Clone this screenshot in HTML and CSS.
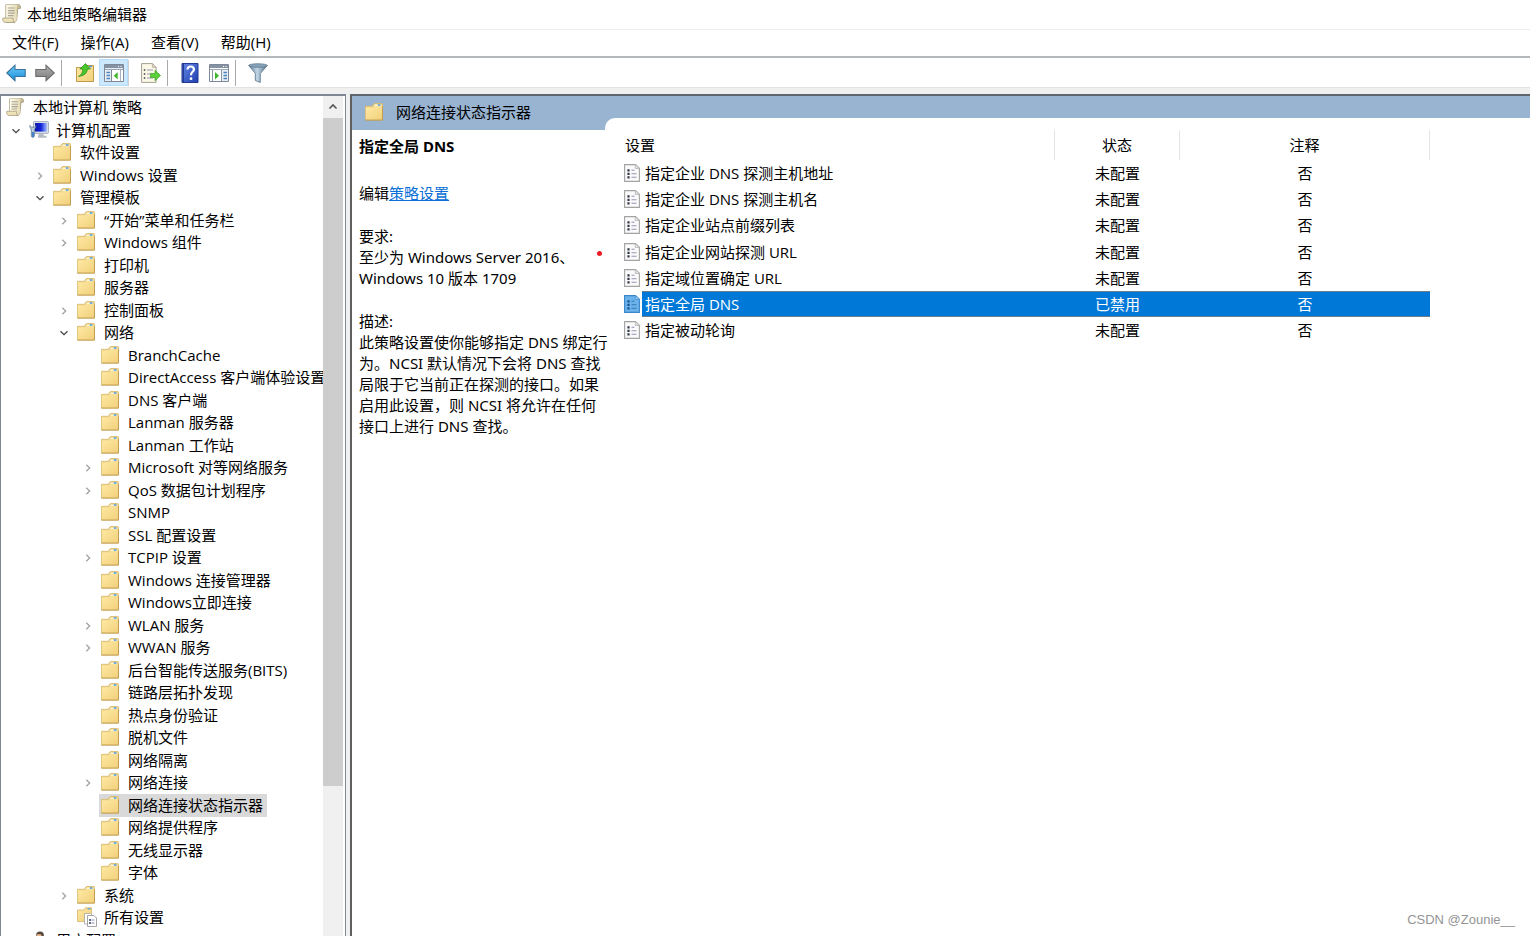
FILE: index.html
```html
<!DOCTYPE html>
<html lang="zh-CN">
<head>
<meta charset="utf-8">
<title>本地组策略编辑器</title>
<link rel="stylesheet" href="styles.css">
</head>
<body>
<svg class="defs" aria-hidden="true">
  <defs>
    <linearGradient id="g-folder" x1="0" y1="0" x2="1" y2="1"><stop offset="0" stop-color="#ffe9a3"/><stop offset="1" stop-color="#f1d07c"/></linearGradient>
    <linearGradient id="g-blue" x1="0" y1="0" x2="0" y2="1"><stop offset="0" stop-color="#6fcaf7"/><stop offset="1" stop-color="#178ddb"/></linearGradient>
    <linearGradient id="g-gray" x1="0" y1="0" x2="0" y2="1"><stop offset="0" stop-color="#b0b0b0"/><stop offset="1" stop-color="#7b7b7b"/></linearGradient>
    <linearGradient id="g-help" x1="0" y1="0" x2="1" y2="1"><stop offset="0" stop-color="#6688e8"/><stop offset="1" stop-color="#1f3fae"/></linearGradient>
    <linearGradient id="g-screen" x1="0" y1="0" x2="1" y2="0"><stop offset="0" stop-color="#0a12a8"/><stop offset=".5" stop-color="#1224d8"/><stop offset="1" stop-color="#a8c0ff"/></linearGradient>
    <linearGradient id="g-funnel" x1="0" y1="0" x2="1" y2="0"><stop offset="0" stop-color="#5d7f9c"/><stop offset=".45" stop-color="#c2d6e6"/><stop offset="1" stop-color="#4f6f8b"/></linearGradient>
    <linearGradient id="g-scroll" x1="0" y1="0" x2="1" y2="0"><stop offset="0" stop-color="#fffdf0"/><stop offset="1" stop-color="#e4d8b0"/></linearGradient>
  </defs>
  <symbol id="folder" viewBox="0 0 18 18">
    <path d="M.5 3.300h7L8.800 1q.3-.5.9-.5h6.800q1 0 1 1V17H.5z" fill="#f3d88f" stroke="#d6b566" stroke-width=".8"/>
    <path d="M9.800 1.700h6.200v1.600H9.200z" fill="#fff6da"/><rect x="12.800" y="1.300" width="2.700" height="1.500" fill="#4a9be0"/>
    <path d="M.8 4.500h8.400l1-1h6.300q.7 0 .7.7v12.300H.8z" fill="url(#g-folder)"/>
    <path d="M.4 17.100h17.100V3.500" fill="none" stroke="#bf9a4c" stroke-width=".9"/>
  </symbol>
  <symbol id="scroll" viewBox="0 0 18 18">
    <path d="M4 .6h12.200q1.800.4 1.200 3.600h-2.400l-1 10.500q-.3 2.200-2 2.700H4z" fill="#c9bd95" stroke="#9a9278" stroke-width=".7"/>
    <path d="M3.500.6h11.700q-1.200 1-1.200 3v10.500q0 2.300-2 3.300H3.500z" fill="url(#g-scroll)"/>
    <path d="M3.500 13V.6" stroke="#b9af90" stroke-width=".8"/>
    <path d="M.8 13.300h9.700q-.4 3.700 1.700 4.100H2.200q-2.200-1.300-1.400-4.100z" fill="#efe3b8" stroke="#a0967a" stroke-width=".7"/>
    <path d="M5.500 3.800h6.500M5.500 6.200h6.500M5.500 8.600h6.500M5.500 11h5.500" stroke="#aaa593" stroke-width="1.100"/>
  </symbol>
  <symbol id="computer" viewBox="0 0 20 18">
    <rect x="4.500" y=".6" width="14.900" height="11.800" rx=".8" fill="#dce2ea" stroke="#8e9aa8" stroke-width=".8"/>
    <rect x="6" y="2" width="12" height="8.600" fill="url(#g-screen)"/>
    <path d="M10 12.400h4l1 2.300h2.500v2H9v-2z" fill="#b6bcc4"/>
    <path d="M.8 4.500q0 3 1.500 3.500v7.500q1.300 2 3 0V8q1.700-.5 1.700-3.500l-1.500 1.700H2.600z" fill="#bdd0e2" stroke="#567491" stroke-width=".8"/>
    <path d="M3 11h2v5H3z" fill="#4384c4"/>
  </symbol>
  <symbol id="user" viewBox="0 0 20 18">
    <circle cx="11" cy="4.500" r="3.900" fill="#54483f"/><circle cx="10" cy="6" r="3" fill="#e8b68c"/><path d="M4 17q0-7 7-7t7 7z" fill="#6aa2d6"/>
  </symbol>
  <symbol id="allset" viewBox="0 0 20 20">
    <path d="M.5 3h6.500L8.300.8h6.200V14.500H.5z" fill="url(#g-folder)" stroke="#d3ad5c" stroke-width=".7"/>
    <path d="M10.500 1.800h3" stroke="#4a9be0" stroke-width="1.200"/>
    <path d="M7.500 6.500h6l2 2v8.500h-8z" fill="#fff" stroke="#a5a5a5" stroke-width=".8"/>
    <path d="M10.500 8.500h6.500l2.500 2.500v8.500h-9z" fill="#fff" stroke="#8f8f8f" stroke-width=".8"/>
    <path d="M12 13h2M12 16h2" stroke="#354063" stroke-width="1.500"/><path d="M14.500 13h3M14.500 16h3" stroke="#8c8cb5"/>
  </symbol>
  <symbol id="doc" viewBox="0 0 16 18">
    <path d="M.6.600h10.900l3.900 3.700v13.100H.6z" fill="#fafafa" stroke="#a3a3a3" stroke-width="1.100"/>
    <path d="M11.300.8v3.700h4" fill="#e3e3e3" stroke="#b5b5b5" stroke-width=".8"/>
    <path d="M3.400 5.200h2.200v2.200H3.400zM3.400 8.700h2.200v2.200H3.400zM3.400 12.200h2.200v2.200H3.400z" fill="#343848"/>
    <path d="M7.500 6.300h3M7.500 9.800h5M7.500 13.300h5" stroke="#9793b8" stroke-width="1.100"/>
  </symbol>
  <symbol id="doc-sel" viewBox="0 0 16 18">
    <path d="M.6.600h10.900l3.900 3.700v13.100H.6z" fill="#6cb2eb" stroke="#3b86c8" stroke-width="1.100"/>
    <path d="M11.300.8v3.700h4" fill="#8fc6f1" stroke="#4b96d6" stroke-width=".8"/>
    <path d="M3.400 5.200h2.200v2.200H3.400zM3.400 8.700h2.200v2.200H3.400zM3.400 12.200h2.200v2.200H3.400z" fill="#155089"/>
    <path d="M7.500 6.300h3M7.500 9.800h5M7.500 13.300h5" stroke="#3377b8" stroke-width="1.100"/>
  </symbol>
  <symbol id="right" viewBox="0 0 16 16"><path d="M6.300 4.700 9.700 8l-3.400 3.300" fill="none" stroke="#a0a0a0" stroke-width="1.200"/></symbol>
  <symbol id="down" viewBox="0 0 16 16"><path d="M4.500 6.300 8 9.700l3.500-3.400" fill="none" stroke="#454545" stroke-width="1.300"/></symbol>
</svg>

<div class="window">
  <header class="titlebar">
    <svg class="ico-title"><use href="#scroll"/></svg>
    <h1>本地组策略编辑器</h1>
  </header>
  <nav class="menubar">
    <button type="button">文件(F)</button><button type="button">操作(A)</button><button type="button">查看(V)</button><button type="button">帮助(H)</button>
  </nav>
  <div class="toolbar" role="toolbar" aria-label="工具栏">
    <button type="button" aria-label="后退"><svg viewBox="0 0 20 18"><path d="M.8 9 9 1.200v4.300h10.200v7H9v4.300z" fill="url(#g-blue)" stroke="#38719c" stroke-width="1.100"/></svg></button>
    <button type="button" aria-label="前进"><svg viewBox="0 0 20 18"><path d="M19.200 9 11 1.200v4.300H.8v7H11v4.300z" fill="url(#g-gray)" stroke="#6b6b6b" stroke-width="1.100"/></svg></button>
    <span class="sep sep-first"></span>
    <button type="button" aria-label="上一级"><svg viewBox="0 0 20 20"><path d="M1.500 4.500h8l2-2h7v16h-17z" fill="url(#g-folder)" stroke="#bf9a4c"/><path d="M14 3.500h3" stroke="#4a9be0" stroke-width="1.300"/><path d="M3.500 13.500Q8 11 7.700 6H4.800l5.700-5.400L15.500 6h-3q-.5 6.500-9 7.500z" fill="#49c52d" stroke="#268c17" stroke-width=".7"/></svg></button>
    <button type="button" class="pressed" aria-label="显示/隐藏控制台树"><svg viewBox="0 0 20 18"><path d="M.5.500h19v17H.5z" fill="#e9eef4" stroke="#7d8998"/><path d="M1 1h18v3H1z" fill="#8492a4"/><path d="M14 2.500h1M16.500 2.500h1" stroke="#fff"/><path d="M1 5.500h18" stroke="#9ba7b5"/><path d="M7.500 6v11" stroke="#7d8998"/><path d="M8 6h11v11H8z" fill="#fff"/><path d="M2.500 8.500h3.500M2.500 11.500h3.500M2.500 14.500h3.500" stroke="#4b84bd" stroke-width="1.300"/><path d="m13.700 8-4 3.700 4 3.700z" fill="#3fb82b"/><path d="M16.500 6v11" stroke="#a7b1bd"/></svg></button>
    <span class="sep sep-tight"></span>
    <button type="button" aria-label="导出列表"><svg viewBox="0 0 20 20"><path d="M.6.600h11l3.500 3.500v15.300H.6z" fill="#fcf8e8" stroke="#a5a091"/><path d="M11.400.8v3.500h3.700" fill="#e3dcc8" stroke="#aaa28e" stroke-width=".7"/><path d="M2.800 7h1.500M2.800 11h1.500M2.800 15h1.500" stroke="#3b3b3b" stroke-width="1.600"/><path d="M6 7h6M6 11h4M6 15h6" stroke="#9694b4" stroke-width="1.200"/><path d="M9.500 10.500h4.500V7.300l5.500 5.200-5.500 5.200v-3.200H9.500z" fill="#5ccf3c" stroke="#38a323" stroke-width=".7"/></svg></button>
    <span class="sep sep-narrow"></span>
    <button type="button" aria-label="帮助"><svg viewBox="0 0 20 20"><path d="M2 .5h16v19H2z" fill="url(#g-help)" stroke="#1f3a8f"/><path d="M2.500 1H4v18H2.500z" fill="#233b96"/><path d="M7.500 6.500q.2-3 3.200-3t3.300 2.800q0 1.700-1.700 2.900-1.300 1-1.300 3" fill="none" stroke="#fff" stroke-width="2.200"/><circle cx="11" cy="15.700" r="1.400" fill="#fff"/></svg></button>
    <button type="button" aria-label="显示/隐藏操作窗格"><svg viewBox="0 0 20 18"><path d="M.5.500h19v17H.5z" fill="#fff" stroke="#7d8998"/><path d="M1 1h18v3H1z" fill="#8492a4"/><path d="M14 2.500h1M16.500 2.500h1" stroke="#fff"/><path d="M1 5.500h18" stroke="#9ba7b5"/><path d="M12.500 6v11M3.500 6v11" stroke="#8b97a5"/><path d="M13 6h6v11h-6z" fill="#e9eef4"/><path d="M14.500 8.500H18M14.500 11.500H18M14.500 14.500H18" stroke="#4b84bd" stroke-width="1.300"/><path d="m6 8 4 3.700-4 3.700z" fill="#3fb82b"/></svg></button>
    <span class="sep sep-narrow"></span>
    <button type="button" aria-label="筛选器"><svg viewBox="0 0 20 20"><path d="M.8 2.500 7.300 10.500v7l5 2v-9l7-8z" fill="url(#g-funnel)" stroke="#597389" stroke-width=".8"/><ellipse cx="10" cy="2.500" rx="9.300" ry="1.800" fill="#87a3ba" stroke="#597389" stroke-width=".7"/></svg></button>
  </div>

  <main class="panes">
    <section class="tree-pane">
      <ul class="tree" role="tree">
        <li class="l0"><span class="node"><svg><use href="#scroll"/></svg>本地计算机 策略</span></li>
        <li class="l1"><svg class="chev"><use href="#down"/></svg><span class="node"><svg class="wide"><use href="#computer"/></svg>计算机配置</span></li>
        <li class="l2"><i class="chev"></i><span class="node"><svg><use href="#folder"/></svg>软件设置</span></li>
        <li class="l2"><svg class="chev"><use href="#right"/></svg><span class="node"><svg><use href="#folder"/></svg>Windows 设置</span></li>
        <li class="l2"><svg class="chev"><use href="#down"/></svg><span class="node"><svg><use href="#folder"/></svg>管理模板</span></li>
        <li class="l3"><svg class="chev"><use href="#right"/></svg><span class="node"><svg><use href="#folder"/></svg>“开始”菜单和任务栏</span></li>
        <li class="l3"><svg class="chev"><use href="#right"/></svg><span class="node"><svg><use href="#folder"/></svg>Windows 组件</span></li>
        <li class="l3"><i class="chev"></i><span class="node"><svg><use href="#folder"/></svg>打印机</span></li>
        <li class="l3"><i class="chev"></i><span class="node"><svg><use href="#folder"/></svg>服务器</span></li>
        <li class="l3"><svg class="chev"><use href="#right"/></svg><span class="node"><svg><use href="#folder"/></svg>控制面板</span></li>
        <li class="l3"><svg class="chev"><use href="#down"/></svg><span class="node"><svg><use href="#folder"/></svg>网络</span></li>
        <li class="l4"><i class="chev"></i><span class="node"><svg><use href="#folder"/></svg>BranchCache</span></li>
        <li class="l4"><i class="chev"></i><span class="node"><svg><use href="#folder"/></svg>DirectAccess 客户端体验设置</span></li>
        <li class="l4"><i class="chev"></i><span class="node"><svg><use href="#folder"/></svg>DNS 客户端</span></li>
        <li class="l4"><i class="chev"></i><span class="node"><svg><use href="#folder"/></svg>Lanman 服务器</span></li>
        <li class="l4"><i class="chev"></i><span class="node"><svg><use href="#folder"/></svg>Lanman 工作站</span></li>
        <li class="l4"><svg class="chev"><use href="#right"/></svg><span class="node"><svg><use href="#folder"/></svg>Microsoft 对等网络服务</span></li>
        <li class="l4"><svg class="chev"><use href="#right"/></svg><span class="node"><svg><use href="#folder"/></svg>QoS 数据包计划程序</span></li>
        <li class="l4"><i class="chev"></i><span class="node"><svg><use href="#folder"/></svg>SNMP</span></li>
        <li class="l4"><i class="chev"></i><span class="node"><svg><use href="#folder"/></svg>SSL 配置设置</span></li>
        <li class="l4"><svg class="chev"><use href="#right"/></svg><span class="node"><svg><use href="#folder"/></svg>TCPIP 设置</span></li>
        <li class="l4"><i class="chev"></i><span class="node"><svg><use href="#folder"/></svg>Windows 连接管理器</span></li>
        <li class="l4"><i class="chev"></i><span class="node"><svg><use href="#folder"/></svg>Windows立即连接</span></li>
        <li class="l4"><svg class="chev"><use href="#right"/></svg><span class="node"><svg><use href="#folder"/></svg>WLAN 服务</span></li>
        <li class="l4"><svg class="chev"><use href="#right"/></svg><span class="node"><svg><use href="#folder"/></svg>WWAN 服务</span></li>
        <li class="l4"><i class="chev"></i><span class="node"><svg><use href="#folder"/></svg>后台智能传送服务(BITS)</span></li>
        <li class="l4"><i class="chev"></i><span class="node"><svg><use href="#folder"/></svg>链路层拓扑发现</span></li>
        <li class="l4"><i class="chev"></i><span class="node"><svg><use href="#folder"/></svg>热点身份验证</span></li>
        <li class="l4"><i class="chev"></i><span class="node"><svg><use href="#folder"/></svg>脱机文件</span></li>
        <li class="l4"><i class="chev"></i><span class="node"><svg><use href="#folder"/></svg>网络隔离</span></li>
        <li class="l4"><svg class="chev"><use href="#right"/></svg><span class="node"><svg><use href="#folder"/></svg>网络连接</span></li>
        <li class="l4"><i class="chev"></i><span class="node selected"><svg><use href="#folder"/></svg>网络连接状态指示器</span></li>
        <li class="l4"><i class="chev"></i><span class="node"><svg><use href="#folder"/></svg>网络提供程序</span></li>
        <li class="l4"><i class="chev"></i><span class="node"><svg><use href="#folder"/></svg>无线显示器</span></li>
        <li class="l4"><i class="chev"></i><span class="node"><svg><use href="#folder"/></svg>字体</span></li>
        <li class="l3"><svg class="chev"><use href="#right"/></svg><span class="node"><svg><use href="#folder"/></svg>系统</span></li>
        <li class="l3"><i class="chev"></i><span class="node"><svg class="wide"><use href="#allset"/></svg>所有设置</span></li>
        <li class="l1"><svg class="chev"><use href="#down"/></svg><span class="node"><svg class="wide"><use href="#user"/></svg>用户配置</span></li>
      </ul>
      <div class="scrollbar">
        <button type="button" aria-label="向上滚动"><svg viewBox="0 0 20 22"><path d="M6.500 12.500 10 9l3.500 3.500" fill="none" stroke="#555" stroke-width="1.600"/></svg></button>
        <div class="thumb"></div>
      </div>
    </section>

    <section class="result-pane">
      <div class="band">
        <h2><svg><use href="#folder"/></svg>网络连接状态指示器</h2>
        <div class="band-tab"></div>
      </div>
      <div class="content">
        <article class="detail">
          <h3>指定全局 DNS</h3>
          <p class="edit">编辑<a href="#policy">策略设置</a></p>
          <p>要求:<br>至少为 Windows Server 2016、<br>Windows 10 版本 1709</p>
          <p>描述:<br>此策略设置使你能够指定 DNS 绑定行<br>为。NCSI 默认情况下会将 DNS 查找<br>局限于它当前正在探测的接口。如果<br>启用此设置，则 NCSI 将允许在任何<br>接口上进行 DNS 查找。</p>
          <span class="dot"></span>
        </article>
        <div class="list">
          <table>
            <colgroup><col class="c-name"><col class="c-state"><col class="c-note"></colgroup>
            <thead><tr><th>设置</th><th>状态</th><th>注释</th></tr></thead>
            <tbody>
              <tr><td><div class="cell"><svg><use href="#doc"/></svg><span>指定企业 DNS 探测主机地址</span></div></td><td>未配置</td><td>否</td></tr>
              <tr><td><div class="cell"><svg><use href="#doc"/></svg><span>指定企业 DNS 探测主机名</span></div></td><td>未配置</td><td>否</td></tr>
              <tr><td><div class="cell"><svg><use href="#doc"/></svg><span>指定企业站点前缀列表</span></div></td><td>未配置</td><td>否</td></tr>
              <tr><td><div class="cell"><svg><use href="#doc"/></svg><span>指定企业网站探测 URL</span></div></td><td>未配置</td><td>否</td></tr>
              <tr><td><div class="cell"><svg><use href="#doc"/></svg><span>指定域位置确定 URL</span></div></td><td>未配置</td><td>否</td></tr>
              <tr class="active"><td><div class="cell"><svg><use href="#doc-sel"/></svg><span>指定全局 DNS</span></div></td><td>已禁用</td><td>否</td></tr>
              <tr><td><div class="cell"><svg><use href="#doc"/></svg><span>指定被动轮询</span></div></td><td>未配置</td><td>否</td></tr>
            </tbody>
          </table>
        </div>
      </div>
    </section>
  </main>
  <div class="watermark">CSDN @Zounie__</div>
</div>
</body>
</html>
```
FILE: styles.css
```css
* { box-sizing: border-box; }

body {
  margin: 0;
  color: #000;
  background: #fff;
  font: 15px/20px "Open Sans", "Noto Sans CJK SC", sans-serif;
}

h1, h2, h3, p, ul { margin: 0; padding: 0; font-size: 15px; font-weight: 400; }
button { padding: 0; border: 0; background: none; color: inherit; font: inherit; }
svg { display: block; flex: none; }
.defs { position: absolute; width: 0; height: 0; }

.window {
  position: relative;
  display: flex;
  flex-direction: column;
  height: 100vh;
  overflow: hidden;
  background: #f0f0f0;
}

.titlebar {
  display: flex;
  align-items: center;
  gap: 6px;
  height: 29px;
  padding: 0 0 2px 2px;
  background: #fff;
}
.ico-title { width: 19px; height: 19px; }

.menubar {
  display: flex;
  gap: 22px;
  height: 29px;
  padding: 0 0 2px 12px;
  background: #fff;
  border-top: 1px solid #ececec;
  border-bottom: 2px solid #b4b8bb;
}

.toolbar {
  display: flex;
  align-items: center;
  height: 30px;
  padding-left: 1px;
  background: #fff;
  border-bottom: 1px solid #e2e2e2;
}
.toolbar button {
  display: flex;
  align-items: center;
  justify-content: center;
  width: 29px;
  height: 27px;
}
.toolbar svg { width: 20px; height: 20px; }
.toolbar .pressed { background: #cce8ff; border: 1px solid #b5dcfa; }
.sep { flex: none; width: 1px; height: 26px; background: #a9a9a9; }
.sep-first { margin: 0 8px 0 2px; }
.sep-tight { margin-right: 7px; background: #d0d0d0; }
.sep-narrow { margin: 0 7px 0 2px; }

.panes {
  flex: 1;
  display: grid;
  grid-template-columns: 346px 1fr;
  gap: 4px;
  min-height: 0;
  padding-top: 6px;
}

.tree-pane {
  display: grid;
  grid-template-columns: 1fr 20px;
  min-height: 0;
  padding-right: 2px;
  background: #fff;
  border: 1px solid #7f8794;
  border-top-width: 2px;
  border-bottom: 0;
}
.tree {
  display: grid;
  grid-auto-rows: 22px 23px;
  align-content: start;
  min-height: 0;
  padding-top: 1px;
  overflow: hidden;
  list-style: none;
  white-space: nowrap;
}
.tree li { display: flex; align-items: center; gap: 3px; }
.l0 { padding-left: 3px; }
.l1 { padding-left: 7px; }
.l2 { padding-left: 31px; }
.l3 { padding-left: 55px; }
.l4 { padding-left: 79px; }
.chev { flex: none; width: 16px; height: 16px; }
.node {
  display: flex;
  align-items: center;
  gap: 9px;
  height: 100%;
  padding: 0 4px 2px 2px;
}
.node svg { width: 18px; height: 18px; }
.node .wide { width: 20px; height: 20px; margin-right: -2px; }
.node.selected { background: #d9d9d9; }

.scrollbar { background: #f0f0f0; }
.scrollbar button { display: block; width: 20px; height: 22px; }
.thumb { height: 668px; background: #cdcdcd; }

.result-pane {
  min-width: 0;
  background: #fff;
  border-top: 2px solid #5f666d;
  border-left: 2px solid #5f5f5f;
}
.band { display: flex; height: 34px; background: #99b4d1; }
.band h2 {
  display: flex;
  align-items: center;
  gap: 13px;
  width: 253px;
  padding: 0 0 2px 13px;
}
.band svg { width: 18px; height: 18px; }
.band-tab {
  flex: 1;
  margin-top: 22px;
  background: #fff;
  border-top-left-radius: 10px;
}

.content { display: grid; grid-template-columns: 265px 1fr; }
.detail {
  position: relative;
  padding: 6px 0 0 7px;
  font-family: "Noto Sans", "Noto Sans CJK SC", sans-serif;
  line-height: 21px;
  white-space: nowrap;
}
.detail h3 { font-weight: 700; }
.detail p { margin-bottom: 22px; }
.detail .edit { margin-top: 26px; }
.detail a { color: #0a6fd6; }
.dot {
  position: absolute;
  top: 121px;
  left: 245px;
  width: 5px;
  height: 5px;
  border-radius: 50%;
  background: #ed1c24;
}

table { width: 813px; table-layout: fixed; border-collapse: separate; border-spacing: 0; }
.c-name { width: 438px; }
.c-state { width: 125px; }
.c-note { width: 250px; }
th, td { height: 26px; padding: 0; font-weight: 400; text-align: center; }
th { height: 30px; border-right: 1px solid #e5e5e5; }
th:first-child { padding-left: 8px; text-align: left; }
td:first-child { padding-left: 7px; text-align: left; }
tbody tr:nth-child(4) td { height: 27px; }
.cell { display: flex; align-items: center; gap: 2px; height: 26px; }
.cell svg { width: 16px; height: 18px; }
.cell span { flex: 1; padding-left: 3px; line-height: 26px; }
.active { color: #fff; }
.active .cell span,
.active td:not(:first-child) { background: #0078d7; box-shadow: inset 0 1px #6b7f92, inset 0 -1px #6b7f92; }

.watermark {
  position: absolute;
  right: 15px;
  bottom: 6px;
  color: #949494;
  font: 13px/20px "Liberation Sans", Arial, sans-serif;
}
```
